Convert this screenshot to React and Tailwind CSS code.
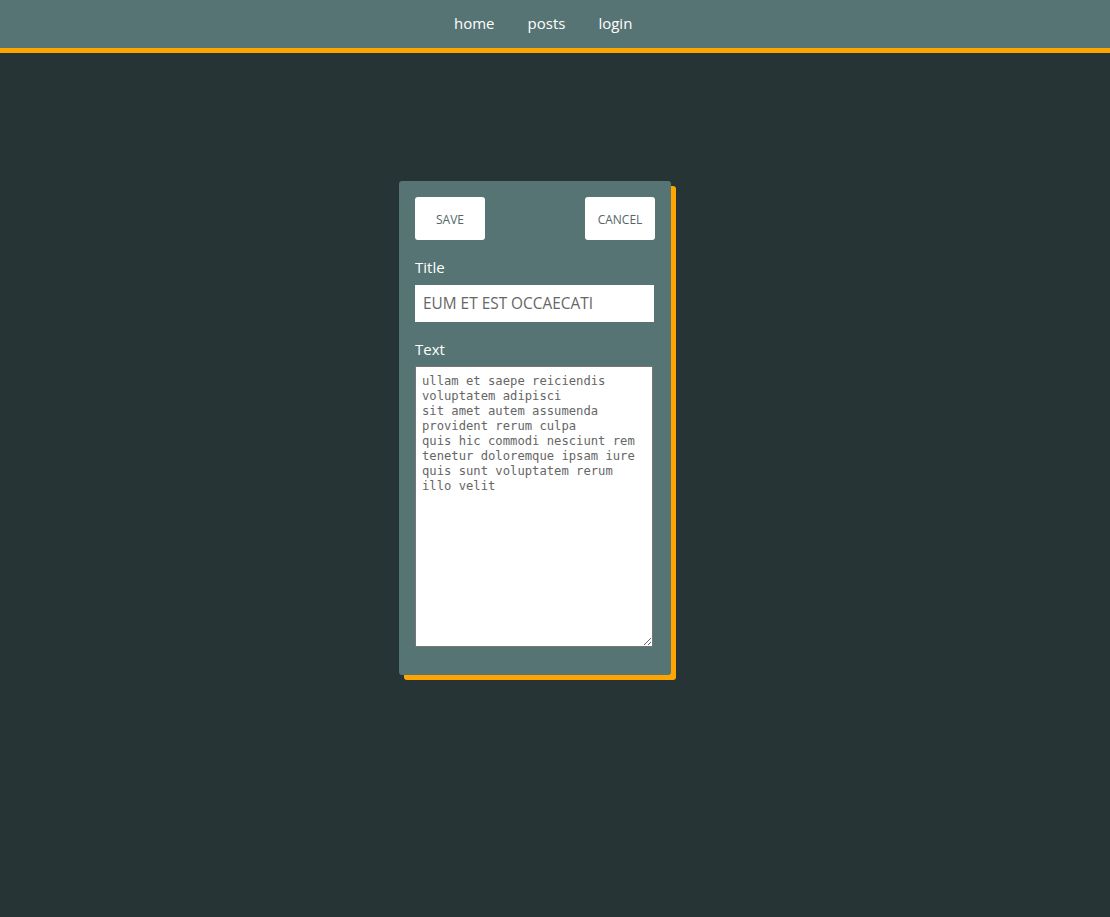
import React, { useState } from 'react';

const NavLink = ({ children }) => (
  <a href="#" className="text-[15px] leading-6 text-white">
    {children}
  </a>
);

const PostEditor = () => {
  const [title, setTitle] = useState('eum et est occaecati');
  const [text, setText] = useState(
    'ullam et saepe reiciendis voluptatem adipisci\nsit amet autem assumenda provident rerum culpa\nquis hic commodi nesciunt rem tenetur doloremque ipsam iure\nquis sunt voluptatem rerum illo velit'
  );

  return (
    <div className="w-[272px] rounded-[3px] bg-[#577474] px-4 pt-4 pb-[28px] shadow-[5px_5px_0_#ffa500]">
      <div className="flex justify-between">
        <button className="h-[43px] w-[70px] rounded-[3px] bg-white pt-[3px] text-[12px] text-[#566]">
          SAVE
        </button>
        <button className="h-[43px] w-[70px] rounded-[3px] bg-white pt-[3px] text-[12px] text-[#566]">
          CANCEL
        </button>
      </div>

      <label className="mt-[17px] mb-2 block text-[15px] leading-5 text-white">Title</label>
      <input
        value={title}
        onChange={(e) => setTitle(e.target.value)}
        className="block h-[37px] w-[239px] bg-white px-2 text-[15.4px] uppercase text-[#666] outline-none"
      />

      <label className="mt-[17px] mb-[7px] block text-[15px] leading-5 text-white">Text</label>
      <textarea
        value={text}
        onChange={(e) => setText(e.target.value)}
        className="block h-[281px] w-[238px] border border-[#767676] bg-white px-[6px] pt-[7px] pb-[6px] text-[12.2px] leading-[15px] text-[#666] outline-none"
        style={{ fontFamily: '"DejaVu Sans Mono", monospace' }}
      />
    </div>
  );
};

export default function App() {
  return (
    <div className="min-h-[917px] bg-[#263436]" style={{ fontFamily: '"Open Sans", "Noto Sans", sans-serif' }}>
      <nav className="flex h-[53px] gap-[33px] border-b-[5px] border-[#ffa500] bg-[#577474] pl-[454px] pt-[11px]">
        <NavLink>home</NavLink>
        <NavLink>posts</NavLink>
        <NavLink>login</NavLink>
      </nav>
      <main className="pl-[399px] pt-[128px]">
        <PostEditor />
      </main>
    </div>
  );
}
